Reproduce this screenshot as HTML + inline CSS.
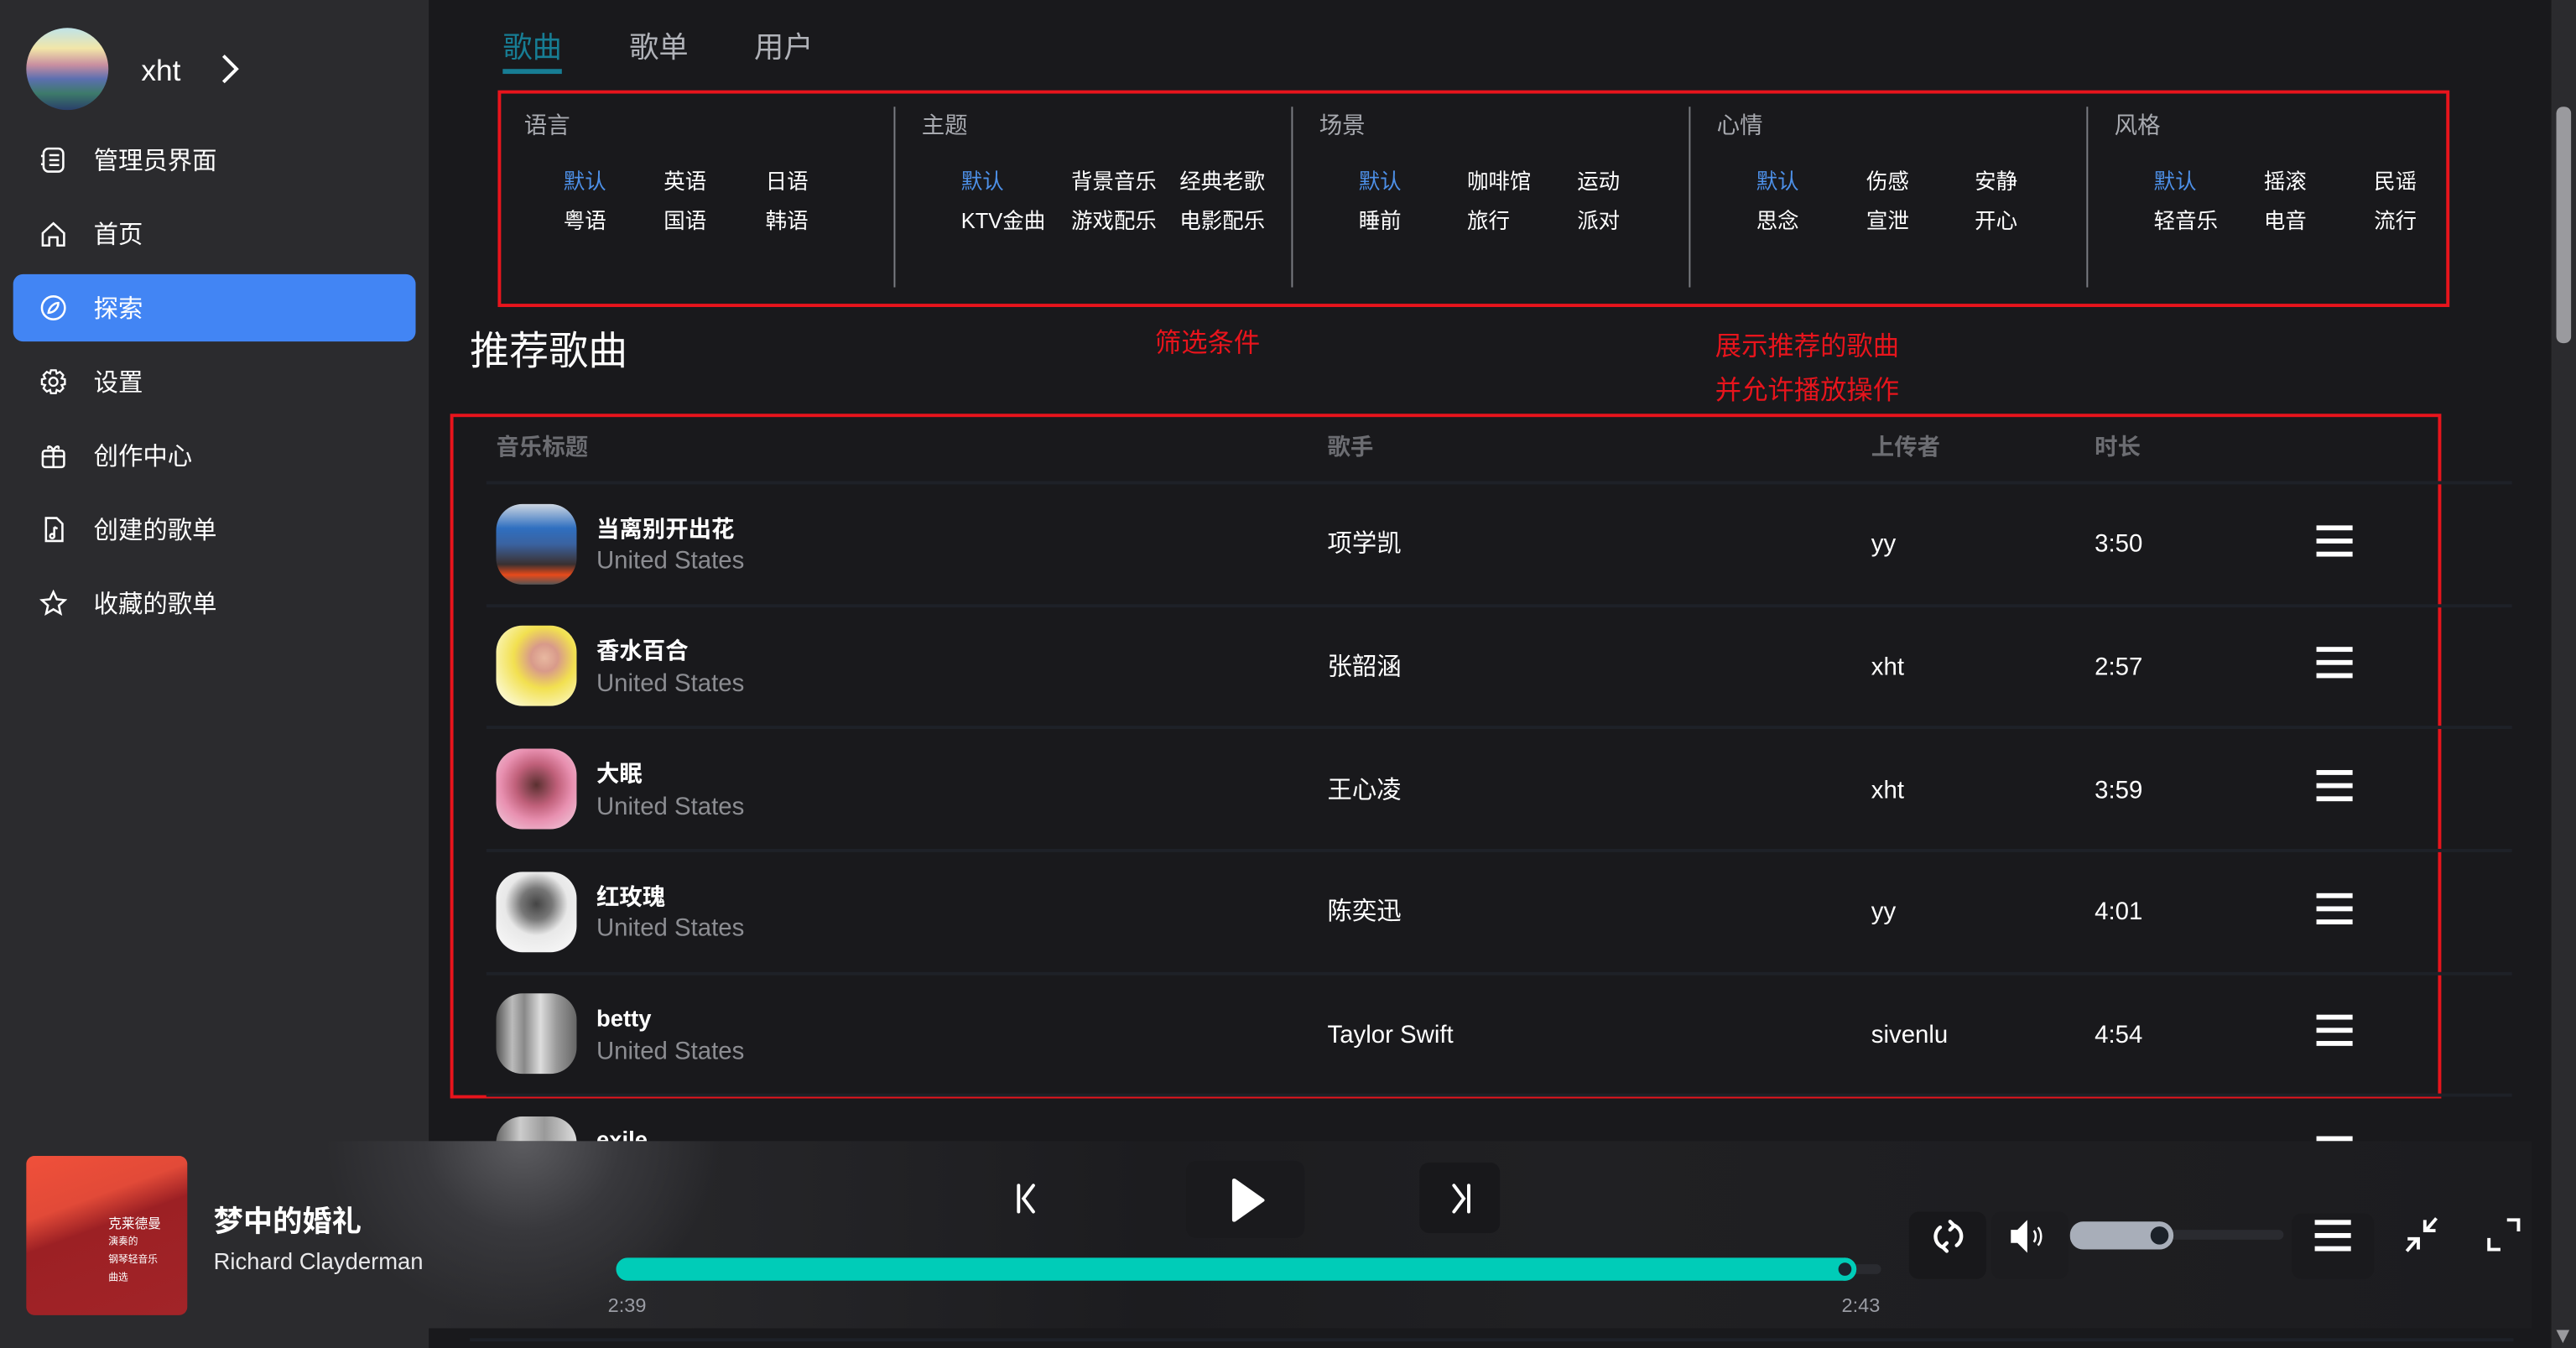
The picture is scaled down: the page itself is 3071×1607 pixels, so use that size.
<!DOCTYPE html>
<html><head><meta charset="utf-8">
<style>
*{margin:0;padding:0;box-sizing:border-box}
html,body{width:3071px;height:1607px;overflow:hidden;background:#19191c}
#s{position:absolute;left:0;top:0;width:1568px;height:821px;transform:scale(1.95855,1.95737);transform-origin:0 0;background:#19191c;font-family:"Liberation Sans","Noto Sans CJK SC",sans-serif;color:#fff;overflow:hidden}
.a{position:absolute;white-space:nowrap}
.side{position:absolute;left:0;top:0;width:261px;height:821px;background:#2b2b2e}
.mi{position:absolute;left:57px;font-size:15px;line-height:20px;color:#fff}
.ic{position:absolute;left:24px;width:17px;height:17px}
.red{position:absolute;border:2px solid #e8141c}
.hd{font-size:14px;color:#a8aab0;line-height:18px}
.it{font-size:13px;line-height:16px;color:#fff}
.bl{color:#4d90e8}
.sep{position:absolute;width:1px;background:#7a7c82;top:65px;height:110px}
.th{font-size:14px;font-weight:bold;color:#6c6d72;line-height:18px;top:263px}
.ln{position:absolute;left:296px;width:1233px;height:2px;background:#1e2128}
.cv{position:absolute;left:302px;width:49px;height:49px;border-radius:16px}
.t1{font-size:14px;font-weight:bold;line-height:18px}
.t2{font-size:15px;color:#8c8d92;line-height:18px}
.cell{font-size:15px;line-height:18px}
.hb{position:absolute;width:22px;height:20px}
.hb i{position:absolute;left:0;width:22px;height:2.6px;background:#fff}
</style></head><body><div id="s">
<div class="side"></div>
<div class="a" style="left:16px;top:17px;width:50px;height:50px;border-radius:50%;background:linear-gradient(180deg,#bfe3e8 0%,#f2e6a8 25%,#c98fa0 45%,#5c6fb0 62%,#3d7a6a 80%,#2a3f6a 100%)"></div>
<div class="a" style="left:86px;top:32px;font-size:18px;line-height:22px">xht</div>
<svg class="a" style="left:133px;top:32px" width="14" height="20" viewBox="0 0 14 20"><path d="M3 2l8 8-8 8" stroke="#fff" stroke-width="2" fill="none"/></svg>
<div class="a" style="left:8px;top:167px;width:245px;height:41px;background:#4285f4;border-radius:6px"></div>
<svg class="ic" style="top:89px" viewBox="0 0 17 17" fill="none" stroke="#fff" stroke-width="1.3"><rect x="2.5" y="1.5" width="12" height="14" rx="3"/><path d="M6 5.5h6M6 8.5h6M6 11.5h6M1 6h2M1 11h2"/></svg>
<div class="mi" style="top:89px">管理员界面</div>
<svg class="ic" style="top:134px" viewBox="0 0 17 17" fill="none" stroke="#fff" stroke-width="1.3"><path d="M2 8L8.5 2 15 8v7.5H11v-5H6v5H2z"/></svg>
<div class="mi" style="top:134px">首页</div>
<svg class="ic" style="top:179px" viewBox="0 0 17 17" fill="none" stroke="#fff" stroke-width="1.3"><circle cx="8.5" cy="8.5" r="7"/><path d="M11.5 5.5c-2 0-5.5 2-6 6 3 0 6-2.5 6-6z"/></svg>
<div class="mi" style="top:179px">探索</div>
<svg class="ic" style="top:224px" viewBox="0 0 17 17" fill="none" stroke="#fff" stroke-width="1.2"><circle cx="8.5" cy="8.5" r="2.5"/><path d="M7 1.5h3l.5 2 2-1 2 2-1 2 2 .5v3l-2 .5 1 2-2 2-2-1-.5 2H7l-.5-2-2 1-2-2 1-2-2-.5V7l2-.5-1-2 2-2 2 1z"/></svg>
<div class="mi" style="top:224px">设置</div>
<svg class="ic" style="top:269px" viewBox="0 0 17 17" fill="none" stroke="#fff" stroke-width="1.3"><rect x="2" y="5.5" width="13" height="10" rx="1.5"/><path d="M2 9h13M8.5 5.5v10M8.5 5.5C7 2 4.5 2.5 5.5 4.5M8.5 5.5C10 2 12.5 2.5 11.5 4.5"/></svg>
<div class="mi" style="top:269px">创作中心</div>
<svg class="ic" style="top:314px" viewBox="0 0 17 17" fill="none" stroke="#fff" stroke-width="1.3"><path d="M4 1.5h6.5L14 5v10.5H4z"/><path d="M9 7v5.5"/><circle cx="7.8" cy="12.5" r="1.3"/><path d="M9 7l2 1"/></svg>
<div class="mi" style="top:314px">创建的歌单</div>
<svg class="ic" style="top:359px" viewBox="0 0 17 17" fill="none" stroke="#fff" stroke-width="1.3"><path d="M8.5 1.5l2.1 4.5 4.9.5-3.7 3.3 1.1 4.9-4.4-2.6-4.4 2.6 1.1-4.9L1.5 6.5l4.9-.5z"/></svg>
<div class="mi" style="top:359px">收藏的歌单</div>

<div class="a" style="left:306px;top:18px;font-size:18px;line-height:22px;color:#177d94">歌曲</div>
<div class="a" style="left:306px;top:42px;width:36px;height:3px;background:#177d94"></div>
<div class="a" style="left:383px;top:18px;font-size:18px;line-height:22px;color:#b0b2b8">歌单</div>
<div class="a" style="left:459px;top:18px;font-size:18px;line-height:22px;color:#b0b2b8">用户</div>

<div class="red" style="left:303px;top:55px;width:1188px;height:132px"></div>
<div class="sep" style="left:544px"></div><div class="sep" style="left:786px"></div><div class="sep" style="left:1028px"></div><div class="sep" style="left:1270px"></div>
<div class="a hd" style="left:319px;top:67px">语言</div>
<div class="a it bl" style="left:343px;top:103px">默认</div><div class="a it" style="left:404px;top:103px">英语</div><div class="a it" style="left:466px;top:103px">日语</div>
<div class="a it" style="left:343px;top:127px">粤语</div><div class="a it" style="left:404px;top:127px">国语</div><div class="a it" style="left:466px;top:127px">韩语</div>
<div class="a hd" style="left:561px;top:67px">主题</div>
<div class="a it bl" style="left:585px;top:103px">默认</div><div class="a it" style="left:652px;top:103px">背景音乐</div><div class="a it" style="left:718px;top:103px">经典老歌</div>
<div class="a it" style="left:585px;top:127px">KTV金曲</div><div class="a it" style="left:652px;top:127px">游戏配乐</div><div class="a it" style="left:718px;top:127px">电影配乐</div>
<div class="a hd" style="left:803px;top:67px">场景</div>
<div class="a it bl" style="left:827px;top:103px">默认</div><div class="a it" style="left:893px;top:103px">咖啡馆</div><div class="a it" style="left:960px;top:103px">运动</div>
<div class="a it" style="left:827px;top:127px">睡前</div><div class="a it" style="left:893px;top:127px">旅行</div><div class="a it" style="left:960px;top:127px">派对</div>
<div class="a hd" style="left:1045px;top:67px">心情</div>
<div class="a it bl" style="left:1069px;top:103px">默认</div><div class="a it" style="left:1136px;top:103px">伤感</div><div class="a it" style="left:1202px;top:103px">安静</div>
<div class="a it" style="left:1069px;top:127px">思念</div><div class="a it" style="left:1136px;top:127px">宣泄</div><div class="a it" style="left:1202px;top:127px">开心</div>
<div class="a hd" style="left:1287px;top:67px">风格</div>
<div class="a it bl" style="left:1311px;top:103px">默认</div><div class="a it" style="left:1378px;top:103px">摇滚</div><div class="a it" style="left:1445px;top:103px">民谣</div>
<div class="a it" style="left:1311px;top:127px">轻音乐</div><div class="a it" style="left:1378px;top:127px">电音</div><div class="a it" style="left:1445px;top:127px">流行</div>

<div class="a" style="left:286px;top:200px;font-size:24px;line-height:30px">推荐歌曲</div>
<div class="a" style="left:703px;top:200px;font-size:16px;line-height:20px;color:#e8141c">筛选条件</div>
<div class="a" style="left:1044px;top:202px;font-size:16px;line-height:20px;color:#e8141c">展示推荐的歌曲</div>
<div class="a" style="left:1044px;top:229px;font-size:16px;line-height:20px;color:#e8141c">并允许播放操作</div>

<div class="red" style="left:274px;top:252px;width:1212px;height:417px"></div>
<div class="a th" style="left:302px">音乐标题</div>
<div class="a th" style="left:808px">歌手</div>
<div class="a th" style="left:1139px">上传者</div>
<div class="a th" style="left:1275px">时长</div>
<div class="ln" style="top:293px"></div>
<div class="ln" style="top:368px"></div>
<div class="ln" style="top:442px"></div>
<div class="ln" style="top:517px"></div>
<div class="ln" style="top:592px"></div>
<div class="ln" style="top:666px"></div>

<div class="cv" style="top:307px;background:linear-gradient(180deg,#cdd6e2 0%,#2f6fc0 30%,#3a62a0 50%,#3a3030 75%,#e84a1a 88%,#555 100%)"></div>
<div class="a t1" style="left:363px;top:313px">当离别开出花</div><div class="a t2" style="left:363px;top:333px">United States</div>
<div class="a cell" style="left:808px;top:323px">项学凯</div><div class="a cell" style="left:1139px;top:323px">yy</div><div class="a cell" style="left:1275px;top:323px">3:50</div>
<div class="hb" style="left:1410px;top:320px"><i style="top:0"></i><i style="top:8px"></i><i style="top:16px"></i></div>

<div class="cv" style="top:381px;background:radial-gradient(circle at 60% 40%,#e8b8a0 0,#d89a8a 20%,#f2e050 45%,#f8f0a0 70%,#fff 100%)"></div>
<div class="a t1" style="left:363px;top:387px">香水百合</div><div class="a t2" style="left:363px;top:408px">United States</div>
<div class="a cell" style="left:808px;top:398px">张韶涵</div><div class="a cell" style="left:1139px;top:398px">xht</div><div class="a cell" style="left:1275px;top:398px">2:57</div>
<div class="hb" style="left:1410px;top:394px"><i style="top:0"></i><i style="top:8px"></i><i style="top:16px"></i></div>

<div class="cv" style="top:456px;background:radial-gradient(circle at 50% 45%,#5a3030 0,#c0607a 35%,#e890b0 60%,#f0d0e0 100%)"></div>
<div class="a t1" style="left:363px;top:462px">大眠</div><div class="a t2" style="left:363px;top:483px">United States</div>
<div class="a cell" style="left:808px;top:473px">王心凌</div><div class="a cell" style="left:1139px;top:473px">xht</div><div class="a cell" style="left:1275px;top:473px">3:59</div>
<div class="hb" style="left:1410px;top:469px"><i style="top:0"></i><i style="top:8px"></i><i style="top:16px"></i></div>

<div class="cv" style="top:531px;background:radial-gradient(circle at 50% 40%,#444 0,#777 25%,#e8e8e8 50%,#f4f4f4 80%,#c8b0d8 100%)"></div>
<div class="a t1" style="left:363px;top:537px">红玫瑰</div><div class="a t2" style="left:363px;top:557px">United States</div>
<div class="a cell" style="left:808px;top:547px">陈奕迅</div><div class="a cell" style="left:1139px;top:547px">yy</div><div class="a cell" style="left:1275px;top:547px">4:01</div>
<div class="hb" style="left:1410px;top:544px"><i style="top:0"></i><i style="top:8px"></i><i style="top:16px"></i></div>

<div class="cv" style="top:605px;background:linear-gradient(90deg,#555 0,#bbb 20%,#888 35%,#ddd 55%,#999 75%,#666 100%)"></div>
<div class="a t1" style="left:363px;top:611px">betty</div><div class="a t2" style="left:363px;top:632px">United States</div>
<div class="a cell" style="left:808px;top:622px">Taylor Swift</div><div class="a cell" style="left:1139px;top:622px">sivenlu</div><div class="a cell" style="left:1275px;top:622px">4:54</div>
<div class="hb" style="left:1410px;top:618px"><i style="top:0"></i><i style="top:8px"></i><i style="top:16px"></i></div>

<div class="cv" style="top:680px;background:linear-gradient(90deg,#666 0,#ccc 30%,#999 60%,#ddd 100%)"></div>
<div class="a t1" style="left:363px;top:685px">exile</div>
<div class="hb" style="left:1410px;top:692px"><i style="top:0"></i></div>

<div class="a" style="left:1553px;top:0;width:15px;height:821px;background:#2b2b2e"></div>
<div class="a" style="left:1556px;top:65px;width:9px;height:144px;background:#9a9a9e;border-radius:4px"></div>
<div class="a" style="left:1556px;top:810px;width:0;height:0;border-left:4px solid transparent;border-right:4px solid transparent;border-top:8px solid #9a9a9e"></div>

<div class="a" style="left:0;top:695px;width:1541px;height:114px;background:radial-gradient(ellipse 120px 110px at 318px 0,#5c5c60 0,#38383c 50%,rgba(40,40,44,0) 100%),linear-gradient(90deg,#2b2b2e 0,#2b2b2e 261px,#242427 480px,#1c1c1f 700px,#202023 950px,#1c1c1f 1541px)"></div>
<div class="a" style="left:286px;top:815px;width:1244px;height:2px;background:#1e2128"></div>
<div class="a" style="left:16px;top:704px;width:98px;height:97px;border-radius:5px;background:linear-gradient(160deg,#f0503a 0,#e24a38 30%,#9c2024 45%,#a22428 100%);overflow:hidden">
 <div class="a" style="left:50px;top:37px;font-size:8px;line-height:10px;color:#fff">克莱德曼<br><span style="font-size:6px">演奏的<br>钢琴轻音乐<br>曲选</span></div>
</div>
<div class="a" style="left:130px;top:732px;font-size:18px;font-weight:bold;line-height:24px">梦中的婚礼</div>
<div class="a" style="left:130px;top:759px;font-size:14px;line-height:18px;color:#e8e8ea">Richard Clayderman</div>

<div class="a" style="left:722px;top:707px;width:72px;height:47px;border-radius:6px;background:#1a1a1d"></div>
<div class="a" style="left:864px;top:708px;width:49px;height:43px;border-radius:6px;background:#18181b"></div>
<svg class="a" style="left:614px;top:719px" width="22" height="22" viewBox="0 0 22 22" fill="none" stroke="#fff" stroke-width="2" stroke-linecap="round"><path d="M6 3v16M15 3l-6 8 6 8"/></svg>
<svg class="a" style="left:745px;top:716px" width="28" height="30" viewBox="0 0 28 30"><path d="M5 3v24c0 1 1 1.5 2 1L24 16c1-.6 1-1.4 0-2L7 2c-1-.5-2 0-2 1z" fill="#fff"/></svg>
<svg class="a" style="left:878px;top:719px" width="22" height="22" viewBox="0 0 22 22" fill="none" stroke="#fff" stroke-width="2" stroke-linecap="round"><path d="M16 3v16M7 3l6 8-6 8"/></svg>

<div class="a" style="left:1120px;top:770px;width:25px;height:6px;background:#2a2b30;border-radius:3px"></div>
<div class="a" style="left:375px;top:766px;width:755px;height:14px;background:#00ccb8;border-radius:7px"></div>
<div class="a" style="left:1116px;top:766px;width:14px;height:14px;border-radius:50%;background:#1a2530;border:3px solid #00ccb8"></div>
<div class="a" style="left:370px;top:788px;font-size:12px;color:#9a9ca4;line-height:14px">2:39</div>
<div class="a" style="left:1121px;top:788px;font-size:12px;color:#9a9ca4;line-height:14px">2:43</div>

<div class="a" style="left:1162px;top:738px;width:47px;height:41px;border-radius:6px;background:#18181b"></div>
<div class="a" style="left:1212px;top:738px;width:47px;height:41px;border-radius:6px;background:#1c1c1f"></div>
<svg class="a" style="left:1173px;top:740px" width="26" height="26" viewBox="0 0 26 26" fill="none" stroke="#fff" stroke-width="2.2" stroke-linecap="round"><path d="M8 7.5a7 7 0 0 0 2 12.3M18 18.5a7 7 0 0 0-2-12.3"/><path d="M14 4l2.5 2.5L14 9M12 22l-2.5-2.5L12 17"/></svg>
<svg class="a" style="left:1221px;top:740px" width="26" height="26" viewBox="0 0 26 26"><path d="M3 9h4l6-6v20l-6-6H3z" fill="#fff"/><path d="M17 9.5c1.5 2 1.5 5 0 7M19.5 7.5c2.5 3 2.5 8 0 11" stroke="#fff" stroke-width="1.3" fill="none"/></svg>
<div class="a" style="left:1300px;top:749px;width:90px;height:6px;background:#2a2b30;border-radius:3px"></div>
<div class="a" style="left:1260px;top:744px;width:62px;height:17px;background:#a8aeb9;border-radius:8px"></div>
<div class="a" style="left:1306px;top:744px;width:17px;height:17px;border-radius:50%;background:#1b2129;border:3px solid #a8aeb9"></div>
<div class="a" style="left:1395px;top:739px;width:50px;height:40px;border-radius:6px;background:#1a1a1d"></div>
<div class="hb" style="left:1409px;top:743px"><i style="top:0;height:3px"></i><i style="top:8px;height:3px"></i><i style="top:16px;height:3px"></i></div>
<svg class="a" style="left:1462px;top:740px" width="24" height="24" viewBox="0 0 24 24" fill="none" stroke="#fff" stroke-width="2"><path d="M21 2l-6 7M14 3v6.5h6.5M3 22l6-7M10 21v-6.5H3.5"/></svg>
<svg class="a" style="left:1512px;top:740px" width="24" height="24" viewBox="0 0 24 24" fill="none" stroke="#fff" stroke-width="2"><path d="M14 3h7v7M3 14v7h7"/></svg>
</div></body></html>
